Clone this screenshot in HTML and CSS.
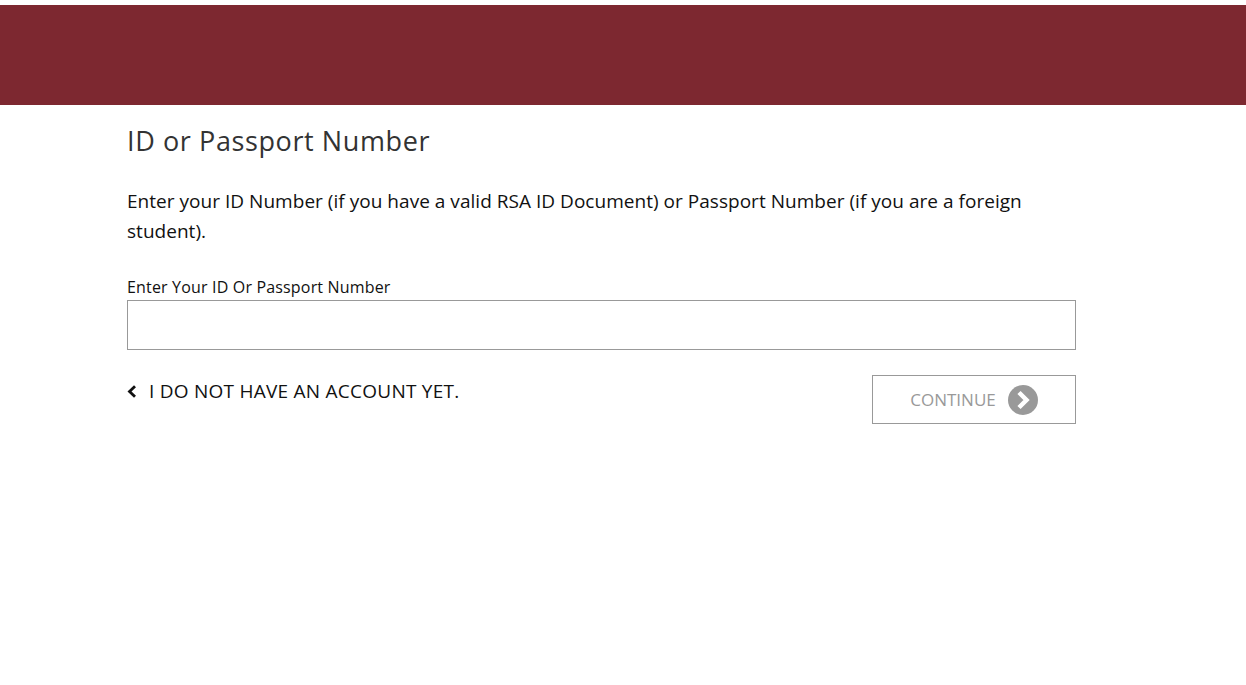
FILE: index.html
```html
<!doctype html>
<html>
<head>
<meta charset="UTF-8">
<meta name="viewport" content="width=device-width,initial-scale=1">
<title>ID or Passport Number</title>
<link rel="stylesheet" href="styles.css">
</head>
<body>
<div class="banner"></div>
<div class="wrap">
	<h1 class="title">ID or Passport Number</h1>
	<p class="intro">Enter your ID Number (if you have a valid RSA ID Document) or Passport Number (if you are a foreign student).</p>

	<label for="idNumber" class="input_label">Enter Your ID Or Passport Number</label>
	<input type="text" id="idNumber" class="input_id">

	<div class="actions">
		<a href="#" class="link_back">
			<svg class="icon_back" width="10" height="13" viewBox="0 0 10 13"><path d="M8 1.200 2.500 6.500 8 11.800" fill="none" stroke="#111" stroke-width="2.800"/></svg>
			I DO NOT HAVE AN ACCOUNT YET.
		</a>
		<button type="button" class="btn_continue">
			CONTINUE
			<svg class="icon_next" width="30" height="30" viewBox="0 0 30 30"><circle cx="15" cy="15" r="15" fill="#999"/><path d="M11 7.500 18.500 15 11 22.500" fill="none" stroke="#fff" stroke-width="4.500"/></svg>
		</button>
	</div>
</div>
</body>
</html>
```

FILE: styles.css
```css
body {
	margin: 0;
	padding-top: 5px;
	background: #fff;
	color: #111;
	font-family: "Open Sans", "Noto Sans", sans-serif;
}
.banner {
	height: 100px;
	background: #7d2830;
}
.wrap {
	width: 949px;
	margin-left: 127px;
}
.title {
	margin: 16px 0 0;
	font-size: 27px;
	line-height: 40px;
	font-weight: 400;
	color: #333;
	letter-spacing: 0.6px;
}
.intro {
	margin: 25px 0 0;
	font-size: 19px;
	line-height: 30px;
	letter-spacing: 0.03px;
}
.input_label {
	display: block;
	margin-top: 30px;
	font-size: 16px;
	line-height: 22px;
	letter-spacing: 0.17px;
}
.input_id {
	display: block;
	box-sizing: border-box;
	width: 100%;
	height: 50px;
	margin-top: 2px;
	border: 1px solid #999;
	background: #fff;
}
.actions {
	display: flex;
	justify-content: space-between;
	align-items: flex-start;
	margin-top: 25px;
}
.link_back {
	display: flex;
	align-items: center;
	gap: 12px;
	padding-top: 1px;
	font-size: 19px;
	line-height: 30px;
	letter-spacing: 0.25px;
	color: #111;
	text-decoration: none;
}
.btn_continue {
	display: flex;
	align-items: center;
	justify-content: center;
	gap: 12px;
	box-sizing: border-box;
	width: 204px;
	height: 49px;
	padding: 0;
	border: 1px solid #999;
	background: #fff;
	color: #999;
	font-family: inherit;
	font-size: 17px;
	font-weight: 400;
	letter-spacing: 0;
}
```
